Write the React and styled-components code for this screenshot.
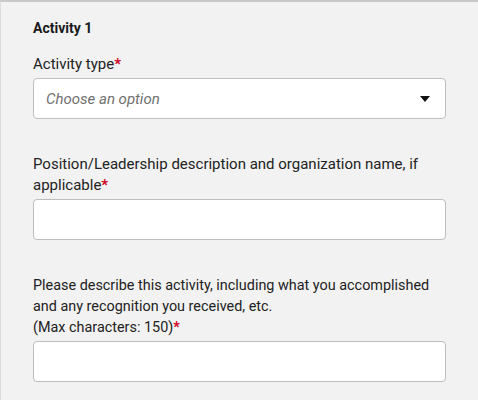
import React from 'react';
import styled, { createGlobalStyle } from 'styled-components';

const GlobalStyle = createGlobalStyle`
  html, body {
    margin: 0;
    padding: 0;
    background: #f2f2f2;
  }
  body {
    font-family: Roboto, "Liberation Sans", sans-serif;
    color: #222;
  }
`;

const Panel = styled.div`
  box-sizing: border-box;
  width: 478px;
  min-height: 400px;
  background: #f2f2f2;
  border-top: 2px solid #c9c9c9;
  border-left: 1px solid #dcdcdc;
  padding: 16px 31px 20px 32px;
`;

const Heading = styled.h3`
  margin: 0 0 15px 0;
  font-size: 14px;
  font-weight: 700;
  line-height: 21px;
  color: #1a1a1a;
`;

const Field = styled.div`
  display: flex;
  flex-direction: column;
  margin-bottom: ${p => (p.$last ? 0 : '35px')};
`;

const Label = styled.label`
  font-size: ${p => p.$size || '15px'};
  line-height: 21px;
  color: #222;
  margin-bottom: 3px;
`;

const Req = styled.span`
  color: #d0021b;
  font-weight: 700;
`;

const Box = styled.div`
  box-sizing: border-box;
  width: 413px;
  height: 41px;
  background: #fff;
  border: 1px solid #bdbdbd;
  border-radius: 4px;
  display: flex;
  align-items: center;
  justify-content: space-between;
  padding: 0 15px 0 12px;
`;

const Placeholder = styled.span`
  font-size: 15px;
  font-style: italic;
  color: #707070;
`;

const Caret = () => (
  <svg width="10" height="6" viewBox="0 0 10 6">
    <path d="M0 0 L10 0 L5 6 Z" fill="#111" />
  </svg>
);

export default function App() {
  return (
    <>
      <GlobalStyle />
      <Panel>
        <Heading>Activity 1</Heading>
        <Field>
          <Label>Activity type<Req>*</Req></Label>
          <Box>
            <Placeholder>Choose an option</Placeholder>
            <Caret />
          </Box>
        </Field>
        <Field>
          <Label>
            Position/Leadership description and organization name, if applicable<Req>*</Req>
          </Label>
          <Box />
        </Field>
        <Field $last>
          <Label $size="14.4px">
            Please describe this activity, including what you accomplished
            <br />
            and any recognition you received, etc.
            <br />
            (Max characters: 150)<Req>*</Req>
          </Label>
          <Box />
        </Field>
      </Panel>
    </>
  );
}
